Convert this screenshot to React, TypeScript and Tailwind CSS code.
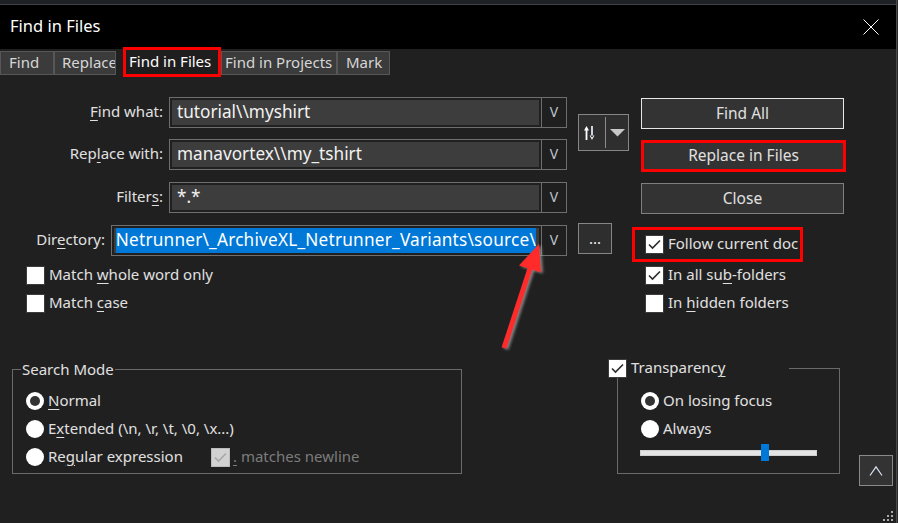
import React from "react";

const tabs = [
  { label: "Find", w: "w-[54px]", pl: "pl-[8px]" },
  { label: "Replace", w: "w-[62px]", pl: "pl-[7px]" },
];

function U({ children }: { children: React.ReactNode }) {
  return <span className="underline decoration-1 underline-offset-[3px]">{children}</span>;
}

function CheckBox({ checked, disabled }: { checked?: boolean; disabled?: boolean }) {
  return (
    <div
      className={`w-[19px] h-[19px] shrink-0 flex items-center justify-center border ${
        disabled ? "bg-[#d2d2d2] border-[#bcbcbc]" : "bg-white border-[#3c3c3c]"
      }`}
    >
      {checked && (
        <svg width="13" height="11" viewBox="0 0 13 11">
          <path d="M1 5.5 L4.5 9 L12 1.5" fill="none" stroke={disabled ? "#a8a8a8" : "#2b2b2b"} strokeWidth="1.6" />
        </svg>
      )}
    </div>
  );
}

function Radio({ on }: { on?: boolean }) {
  return (
    <div className="w-[18px] h-[18px] shrink-0 rounded-full bg-white flex items-center justify-center">
      {on && <div className="w-[10px] h-[10px] rounded-full bg-[#333333]" />}
    </div>
  );
}

function DropBtn() {
  return (
    <div className="w-[26px] h-full border border-[#6e6e6e] bg-[#1f1f1f] flex items-center justify-center pb-[2px] text-[14px] text-[#bfc6cf]">
      V
    </div>
  );
}

function Combo({ w, text }: { w: string; text: string }) {
  return (
    <div className="flex h-[31px]">
      <div className={`${w} h-full border border-r-0 border-[#6e6e6e] p-[2px] bg-[#202020]`}>
        <div className="h-full bg-[#3d3d3d] pl-[5px] pb-[2px] flex items-center text-[17.2px] text-[#f2f2f2] whitespace-nowrap overflow-hidden">
          {text}
        </div>
      </div>
      <DropBtn />
    </div>
  );
}

export default function App() {
  return (
    <div className="w-[898px] h-[523px] overflow-hidden bg-[#202020] flex relative font-['Noto_Sans','Segoe_UI',sans-serif] text-[#e0e0e0] text-[15px] leading-[20px]">
      <div className="w-[896px] flex flex-col">
        <div className="h-[5px] bg-[#1d2125] border-b border-[#3e4146]" />
        {/* title bar */}
        <div className="h-[44px] bg-black flex items-center justify-between pl-[10px] pr-[17px]">
          <span className="text-[16.5px] text-white pb-[2px]">Find in Files</span>
          <svg width="16" height="16" viewBox="0 0 16 16">
            <path d="M0.5 0.5 L15.5 15.5 M15.5 0.5 L0.5 15.5" stroke="#ffffff" strokeWidth="1" />
          </svg>
        </div>

        {/* tabs */}
        <div className="h-[28px] flex items-start">
          {tabs.map((t) => (
            <div
              key={t.label}
              className={`${t.w} ${t.pl} h-[24px] mt-[2px] pb-[2px] bg-[#3b3b3b] border border-[#575757] text-[#d6d6d6] flex items-center whitespace-nowrap overflow-hidden`}
            >
              {t.label}
            </div>
          ))}
          <div className="w-[7px]" />
          <div className="w-[98px] h-[30px] -mt-[2px] pb-[2px] border-[3px] border-[#ff0000] bg-[#1e1e1e] pl-[3px] flex items-center text-white whitespace-nowrap overflow-hidden">
            Find in Files
          </div>
          <div className="w-[116px] h-[24px] mt-[2px] pb-[2px] bg-[#3b3b3b] border border-[#575757] text-[#d6d6d6] pl-[3px] flex items-center whitespace-nowrap overflow-hidden">
            Find in Projects
          </div>
          <div className="w-[53px] h-[24px] mt-[2px] pb-[2px] bg-[#3b3b3b] border border-[#575757] text-[#d6d6d6] pl-[8px] flex items-center">
            Mark
          </div>
        </div>

        <div className="flex flex-col pt-[20px]">
          {/* upper */}
          <div className="flex">
            <div className="w-[567px] flex flex-col">
              <div className="flex items-center">
                <div className="w-[163px] text-right pb-[4px]">
                  <U>F</U>ind what:
                </div>
                <div className="ml-[6px]">
                  <Combo w="w-[372px]" text="tutorial\\myshirt" />
                </div>
              </div>
              <div className="flex items-center mt-[11px]">
                <div className="w-[163px] text-right pb-[4px]">
                  Rep<U>l</U>ace with:
                </div>
                <div className="ml-[6px]">
                  <Combo w="w-[372px]" text="manavortex\\my_tshirt" />
                </div>
              </div>
              <div className="flex items-center mt-[12px]">
                <div className="w-[163px] text-right pb-[4px]">
                  Filter<U>s</U>:
                </div>
                <div className="ml-[6px]">
                  <Combo w="w-[372px]" text="*.*" />
                </div>
              </div>
              <div className="flex items-center mt-[12px]">
                <div className="w-[105px] text-right pb-[4px]">
                  Dir<U>e</U>ctory:
                </div>
                <div className="ml-[6px] flex h-[31px]">
                  <div className="w-[430px] h-full border border-r-0 border-[#6e6e6e] p-[2px] bg-[#202020]">
                    <div className="h-full bg-[#3d3d3d] pl-[6px] pr-[3px] flex justify-end overflow-hidden">
                      <span className="shrink-0 h-full bg-[#0078d7] text-white text-[17.2px] tracking-[0.22px] pb-[2px] flex items-center whitespace-nowrap">
                        Netrunner\_ArchiveXL_Netrunner_Variants\source\
                      </span>
                    </div>
                  </div>
                  <DropBtn />
                </div>
              </div>
              <div className="flex items-center mt-[10px] pl-[26px] gap-[4px]">
                <CheckBox />
                <span className="-mt-[3px]">
                  Match <U>w</U>hole word only
                </span>
              </div>
              <div className="flex items-center mt-[9px] pl-[26px] gap-[4px]">
                <CheckBox />
                <span className="-mt-[3px]">
                  Match <U>c</U>ase
                </span>
              </div>
            </div>

            {/* swap + browse */}
            <div className="ml-[11px] w-[51px] flex flex-col">
              <div className="mt-[17px] h-[37px] w-[51px] border border-[#868686] bg-[#2e2e2e] flex items-center">
                <div className="w-[26px] pl-[5px] flex items-center">
                  <svg width="11" height="14" viewBox="0 0 11 14">
                    <path d="M0 4.5 L2.5 0 L5 4.5 Z M1.6 3 H3.4 V14 H1.6 Z" fill="#ffffff" />
                    <path d="M7.1 0 H8.9 V11 H7.1 Z M5.5 9.5 L8 14 L10.5 9.5 Z" fill="#dfe6f0" />
                  </svg>
                </div>
                <div className="w-[1px] h-[31px] bg-[#8c8c8c]" />
                <div className="flex-1 flex justify-center">
                  <svg width="15" height="8" viewBox="0 0 15 8">
                    <path d="M0 0 H15 L7.5 7.5 Z" fill="#c8c8c8" />
                  </svg>
                </div>
              </div>
              <div className="mt-[72px] h-[31px] w-[34px] border border-[#868686] bg-[#2e2e2e] flex items-center justify-center pb-[1px] text-[#eef2f8]">
                ...
              </div>
            </div>

            {/* right buttons */}
            <div className="ml-[12px] w-[205px] flex flex-col">
              <div className="mt-[1px] h-[31px] w-[203px] pb-[2px] border border-[#e8e8e8] bg-[#333333] flex items-center justify-center text-[15.5px]">
                Find All
              </div>
              <div className="mt-[11px] h-[32px] w-[205px] pb-[2px] border-[3px] border-[#ff0000] bg-[#333333] flex items-center justify-center text-[15.5px]">
                Replace in Files
              </div>
              <div className="mt-[11px] h-[31px] w-[203px] pb-[2px] border border-[#7f7f7f] bg-[#333333] flex items-center justify-center text-[15.5px]">
                Close
              </div>
              <div className="mt-[13px] -ml-[9px] h-[35px] w-[171px] border-[3px] border-[#ff0000] pl-[10px] flex items-center gap-[4px] overflow-hidden whitespace-nowrap">
                <CheckBox checked />
                <span className="-mt-[3px]">Follow current doc</span>
              </div>
              <div className="mt-[4px] ml-[4px] flex items-center gap-[4px]">
                <CheckBox checked />
                <span className="-mt-[3px]">
                  In all su<U>b</U>-folders
                </span>
              </div>
              <div className="mt-[9px] ml-[4px] flex items-center gap-[4px]">
                <CheckBox />
                <span className="-mt-[3px]">
                  In <U>h</U>idden folders
                </span>
              </div>
            </div>
          </div>

          {/* lower */}
          <div className="flex items-start mt-[46px]">
            <fieldset className="ml-[12px] w-[450px] h-[115px] border border-[#6a6a6a]">
              <legend className="ml-[8px] px-[1px]">Search Mode</legend>
              <div className="pl-[13px] pt-[13px] flex flex-col gap-[10px]">
                <div className="flex items-center gap-[4px] h-[18px]">
                  <Radio on />
                  <span className="-mt-[3px]">
                    <U>N</U>ormal
                  </span>
                </div>
                <div className="flex items-center gap-[4px] h-[18px]">
                  <Radio />
                  <span className="-mt-[3px]">
                    E<U>x</U>tended (\n, \r, \t, \0, \x...)
                  </span>
                </div>
                <div className="flex items-center gap-[4px] h-[18px]">
                  <Radio />
                  <span className="w-[159px] -mt-[3px]">
                    Re<U>g</U>ular expression
                  </span>
                  <CheckBox checked disabled />
                  <span className="text-[#7c7c7c] ml-[-1px] -mt-[3px]">
                    <U>.</U> matches newline
                  </span>
                </div>
              </div>
            </fieldset>

            <fieldset className="ml-[155px] w-[223px] h-[115px] border border-[#6a6a6a]">
              <legend className="-ml-[10px] w-[181px] flex items-center gap-[4px]">
                <CheckBox checked />
                <span className="-mt-[3px]">
                  Transparenc<U>y</U>
                </span>
              </legend>
              <div className="pl-[23px] pt-[14px] flex flex-col gap-[10px]">
                <div className="flex items-center gap-[4px] h-[18px]">
                  <Radio on />
                  <span className="-mt-[3px]">On losing focus</span>
                </div>
                <div className="flex items-center gap-[4px] h-[18px]">
                  <Radio />
                  <span className="-mt-[3px]">Always</span>
                </div>
                <div className="-mt-[4px] ml-[-1px] relative w-[177px] h-[17px] flex items-center">
                  <div className="w-full h-[6px] bg-[#e4e4e4] border border-[#cfcfcf]" />
                  <div className="absolute left-[121px] top-0 w-[8px] h-[17px] bg-[#0078d7]" />
                </div>
              </div>
            </fieldset>

            <div className="ml-[19px] mt-[96px] w-[34px] h-[31px] border border-[#8a8a8a] bg-[#333333] flex items-center justify-center">
              <svg width="14" height="10" viewBox="0 0 14 10">
                <path d="M1 9.5 L7 0.8 L13 9.5" fill="none" stroke="#d8e4f4" strokeWidth="1.2" />
              </svg>
            </div>
          </div>
        </div>
      </div>
      <div className="w-[2px] border-l border-[#4a4a4a] bg-[#2a2a2a]" />

      {/* resize grip */}
      <svg className="absolute left-[882px] top-[510px]" width="12" height="12" viewBox="0 0 12 12">
        <rect x="9" y="1" width="2" height="2" fill="#a8a8a8" />
        <rect x="5" y="5" width="2" height="2" fill="#a8a8a8" />
        <rect x="9" y="5" width="2" height="2" fill="#a8a8a8" />
        <rect x="1" y="9" width="2" height="2" fill="#a8a8a8" />
        <rect x="5" y="9" width="2" height="2" fill="#a8a8a8" />
        <rect x="9" y="9" width="2" height="2" fill="#a8a8a8" />
      </svg>

      {/* red annotation arrow */}
      <svg
        className="absolute left-[495px] top-[236px] drop-shadow-[2px_1px_1.5px_rgba(170,170,170,0.75)]"
        width="55"
        height="120"
        viewBox="0 0 55 120"
      >
        <path d="M35.5 31 L9 112" stroke="#ff2b2b" strokeWidth="5" />
        <path d="M44 8 L24 29.5 L46 36.5 Z" fill="#ff2b2b" />
      </svg>
    </div>
  );
}
